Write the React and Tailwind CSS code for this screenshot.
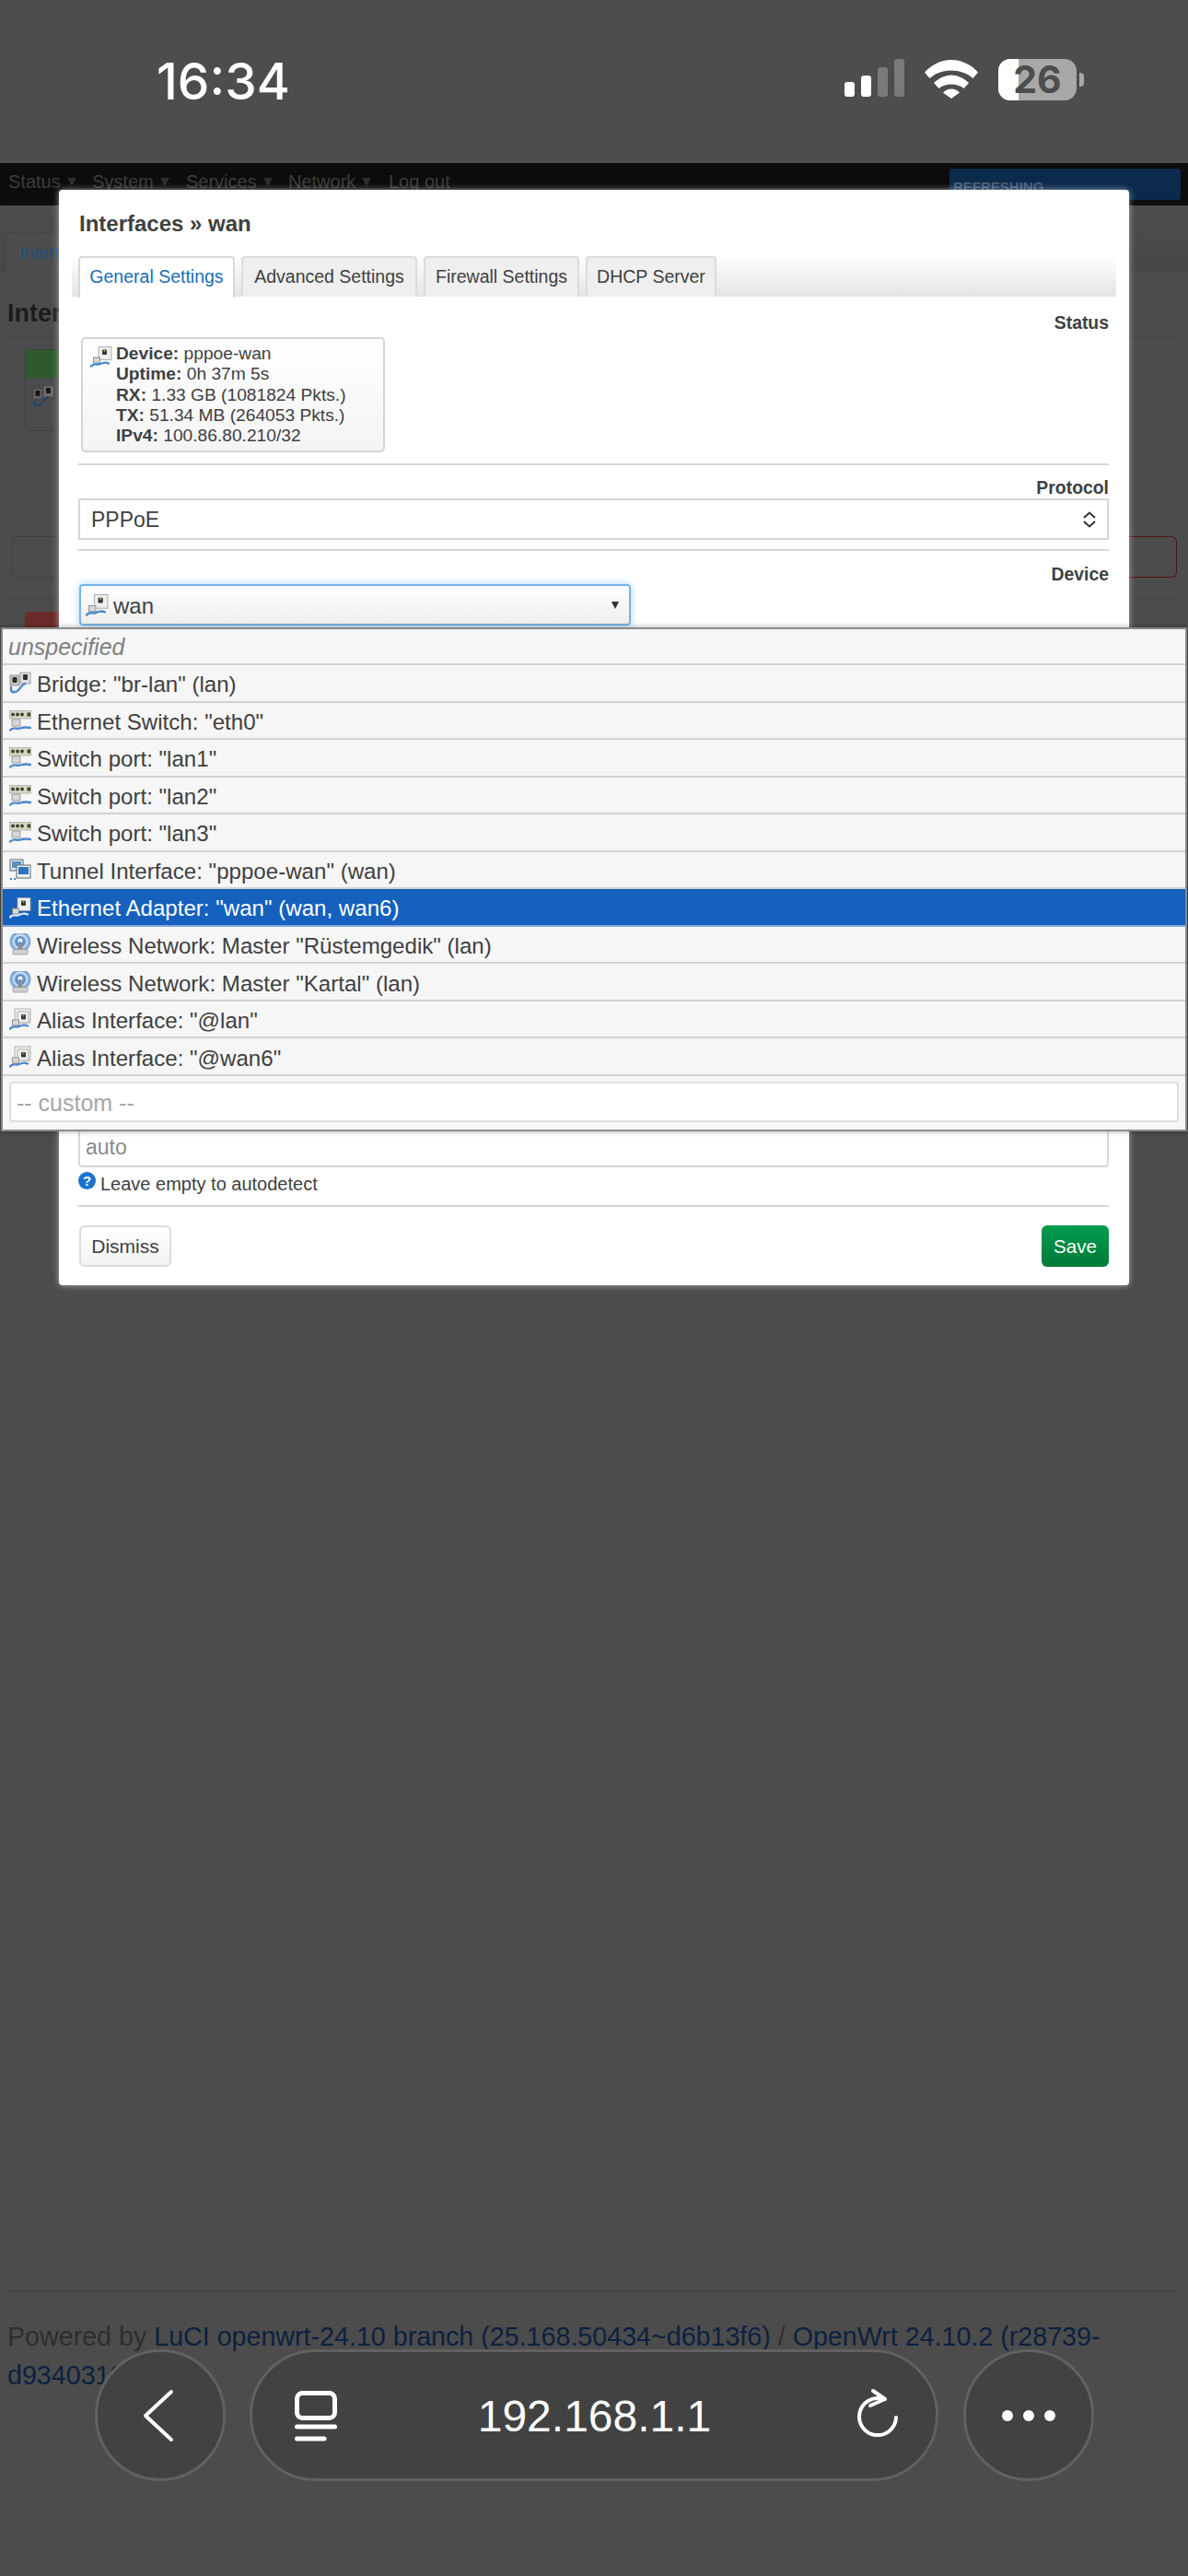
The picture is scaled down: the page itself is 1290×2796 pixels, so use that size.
import React from "react";

function Swoosh({ c = "#4a88cc" }) {
  return <path d="M1 22.5C4 18 7 22 11 20S17 18 20 19.5" fill="none" stroke={c} strokeWidth="2.4" strokeLinecap="round" />;
}

function AdapterIcon({ light, alias }) {
  return (
    <svg viewBox="0 0 24 24" className="w-full h-full">
      {alias && <rect x="6" y="1" width="17" height="15" fill="#f1f1f1" stroke="#a0a0a0" strokeWidth=".8" />}
      <rect x="9" y={alias ? 4 : 1.5} width={alias ? 12 : 14} height={alias ? 12 : 14} fill="#eeeeee" stroke="#a0a0a0" strokeWidth=".8" />
      <rect x="13" y={alias ? 7 : 4.5} width="5" height="5.5" rx="1" fill="#2f3a2a" />
      <rect x="14.6" y={alias ? 7.6 : 5.1} width="1.8" height="1.6" fill="#9fb56a" />
      <rect x="3.5" y="13" width="7" height="6" fill="#d6d6d6" stroke="#808080" strokeWidth=".8" />
      <Swoosh c={light ? "#dfe8f5" : "#4a88cc"} />
    </svg>
  );
}

function BridgeIcon() {
  return (
    <svg viewBox="0 0 24 24" className="w-full h-full">
      <rect x="1" y="4" width="10" height="11" fill="#c8c8c8" stroke="#808080" strokeWidth=".8" />
      <rect x="12" y="1" width="11" height="12" fill="#dedede" stroke="#909090" strokeWidth=".8" />
      <rect x="3.5" y="6" width="5" height="6" rx="1.2" fill="#2c2c2c" />
      <rect x="15" y="3" width="5" height="6" rx="1.2" fill="#2c2c2c" />
      <path d="M2 17V20C3 23 7 23 10 20S13 15 17 13" fill="none" stroke="#4a88cc" strokeWidth="2.4" strokeLinecap="round" />
    </svg>
  );
}

function SwitchIcon() {
  return (
    <svg viewBox="0 0 24 24" className="w-full h-full">
      <rect x="0.5" y="1.5" width="23" height="8.5" fill="#d8d8c4" stroke="#989898" strokeWidth=".6" />
      <circle cx="4" cy="5.5" r="2" fill="#3c4830" />
      <circle cx="9" cy="5.5" r="2" fill="#3c4830" />
      <circle cx="14" cy="5.5" r="2" fill="#3c4830" />
      <rect x="19.5" y="3.5" width="3.5" height="4" fill="#3c4830" />
      <rect x="3" y="11" width="9" height="7" fill="#d8d8d8" stroke="#808080" strokeWidth=".7" />
      <path d="M1 22.5C5 18 8 22 12 20.5S18 19 23 20" fill="none" stroke="#4a88cc" strokeWidth="2.4" strokeLinecap="round" />
    </svg>
  );
}

function TunnelIcon() {
  return (
    <svg viewBox="0 0 24 24" className="w-full h-full">
      <rect x="1" y="1" width="14" height="12" fill="#dfe5ec" stroke="#68747f" strokeWidth="1.1" />
      <rect x="3" y="3" width="10" height="7" fill="#5a8fc8" />
      <rect x="8" y="7" width="15" height="14" fill="#eef0f2" stroke="#68747f" strokeWidth="1.1" />
      <rect x="10" y="9" width="11" height="8" fill="#2f73bd" />
      <rect x="1" y="21" width="2" height="2" fill="#4a88cc" />
      <rect x="5" y="21" width="2" height="2" fill="#4a88cc" />
    </svg>
  );
}

function WifiIcon() {
  return (
    <svg viewBox="0 0 24 24" className="w-full h-full">
      <circle cx="12" cy="9" r="11.5" fill="#82abd9" />
      <circle cx="12" cy="9" r="8.5" fill="#c3d7ee" />
      <circle cx="12" cy="9" r="6" fill="#5d93cf" />
      <circle cx="12" cy="8" r="2.6" fill="#eaf1f8" />
      <path d="M9 18L11 9H13L15 18Z" fill="#8e8e8e" />
      <rect x="4" y="17.5" width="16" height="5.5" rx="1" fill="#cfcfcf" stroke="#949494" strokeWidth=".7" />
    </svg>
  );
}

const rows = [
  { t: 'Bridge: "br-lan" (lan)', I: BridgeIcon },
  { t: 'Ethernet Switch: "eth0"', I: SwitchIcon },
  { t: 'Switch port: "lan1"', I: SwitchIcon },
  { t: 'Switch port: "lan2"', I: SwitchIcon },
  { t: 'Switch port: "lan3"', I: SwitchIcon },
  { t: 'Tunnel Interface: "pppoe-wan" (wan)', I: TunnelIcon },
  { t: 'Ethernet Adapter: "wan" (wan, wan6)', I: AdapterIcon, sel: true },
  { t: 'Wireless Network: Master "Rüstemgedik" (lan)', I: WifiIcon },
  { t: 'Wireless Network: Master "Kartal" (lan)', I: WifiIcon },
  { t: 'Alias Interface: "@lan"', I: AdapterIcon, alias: true },
  { t: 'Alias Interface: "@wan6"', I: AdapterIcon, alias: true },
];

function NavItem({ label, caret = true, width }) {
  return (
    <div className={`flex items-center gap-[7px] h-[40px] ${width}`}>
      <span>{label}</span>
      {caret && (
        <svg viewBox="0 0 10 9" className="w-[10px] h-[9px]"><path d="M0 0H10L5 9Z" fill="#2e2e2e" /></svg>
      )}
    </div>
  );
}

export default function App() {
  return (
    <div className="relative w-[1290px] h-[2796px] overflow-hidden bg-[#4c4c4c] flex flex-col font-['Liberation_Sans',Arial,sans-serif]">
      {/* status bar */}
      <div className="h-[177px] shrink-0 bg-[#4d4d4d] flex items-start justify-between pt-[56px] pl-[170px] pr-[113px]">
        <span className="text-[55px] leading-[64px] font-['Inter',sans-serif] font-medium text-white">16:34</span>
        <div className="flex items-center gap-[22px] h-[60px]">
          <div className="flex items-end gap-[7px] h-[41px] mt-[-4px]">
            <div className="w-[11px] h-[16px] rounded-[3px] bg-white" />
            <div className="w-[11px] h-[23px] rounded-[3px] bg-white" />
            <div className="w-[11px] h-[32px] rounded-[3px] bg-[#7a7a7a]" />
            <div className="w-[11px] h-[41px] rounded-[3px] bg-[#7a7a7a]" />
          </div>
          <svg viewBox="0 0 58 43" className="w-[58px] h-[43px] mt-[-2px]">
            <path d="M0 14.5 L5.5 21 C18 9.5 40 9.5 52.5 21 L58 14.5 C42 -3.5 16 -3.5 0 14.5Z" fill="#fff" />
            <path d="M10 26 L15.5 32 C22 26 36 26 42.5 32 L48 26 C36 14.5 22 14.5 10 26Z" fill="#fff" />
            <path d="M20 36.5 L29 43 L38 36.5 C33 31 25 31 20 36.5Z" fill="#fff" />
          </svg>
          <div className="flex items-center">
            <div className="relative w-[85px] h-[45px] rounded-[13px] bg-[#a8a8a8] flex items-center justify-center">
              <div className="absolute left-0 top-0 bottom-0 w-[22px] rounded-l-[13px] bg-white" />
              <span className="relative text-[41px] leading-[45px] font-['Inter',sans-serif] font-bold text-[#4d4d4d]">26</span>
            </div>
            <div className="w-[5px] h-[15px] ml-[3px] rounded-r-[4px] bg-[#a8a8a8]" />
          </div>
        </div>
      </div>

      {/* dimmed nav */}
      <div className="h-[46px] shrink-0 bg-[#0c0c0c] flex items-start pl-[9px] pr-[8px] text-[20px] leading-[40px] text-[#3c3c3c]">
        <NavItem label="Status" width="w-[91px]" />
        <NavItem label="System" width="w-[102px]" />
        <NavItem label="Services" width="w-[111px]" />
        <NavItem label="Network" width="w-[109px]" />
        <NavItem label="Log out" caret={false} width="w-[80px]" />
        <div className="ml-auto mt-[6px] w-[251px] h-[34px] rounded-[3px] bg-[#0c2a4c] pl-[4px] text-[15px] leading-[40px] font-bold text-[#4a5d75]">REFRESHING</div>
      </div>

      {/* dimmed page */}
      <div className="h-[73px] shrink-0 bg-gradient-to-b from-[#4d4d4d] to-[#474747] flex items-end pl-[6px]">
        <div className="w-[200px] h-[44px] rounded-t-[4px] border border-[#454545] border-b-0 bg-[#4d4d4d] pl-[14px] text-[19px] leading-[44px] text-[#1e5083]">Interfaces</div>
      </div>
      <div className="flex-1 flex flex-col px-[8px]">
        <div className="h-[70px] shrink-0 border-b-2 border-[#464646] text-[27px] leading-[88px] font-bold text-[#1c1c1c] overflow-hidden">Interfaces</div>
        <div className="ml-[19px] mt-[13px] w-[300px] h-[89px] rounded-[5px] border border-[#3e3e3e] overflow-hidden">
          <div className="h-[30px] bg-[#2e5a2e]" />
          <div className="w-[24px] h-[24px] ml-[7px] mt-[8px] brightness-50"><BridgeIcon /></div>
        </div>
        <div className="ml-[5px] mt-[114px] mr-[4px] h-[45px] flex">
          <div className="flex-1 rounded-l-[6px] border border-r-0 border-[#424242]" />
          <div className="flex-1 rounded-r-[6px] border border-l-0 border-[#4f1212]" />
        </div>
        <div className="mt-[23px] h-[2px] bg-[#464646]" />
        <div className="ml-[19px] mt-[12px] w-[300px] h-[30px] rounded-t-[5px] bg-[#6b2a2a]" />

        <div className="mt-auto border-t-2 border-[#474747] h-[310px] shrink-0 pt-[27px] text-[28.65px] leading-[42px] text-[#2e2e2e]">
          Powered by <span className="text-[#0d2140]">LuCI openwrt-24.10 branch (25.168.50434~d6b13f6)</span> / <span className="text-[#0d2140]">OpenWrt 24.10.2 (r28739-d9340319)</span>
        </div>
      </div>

      {/* modal */}
      <div className="absolute left-[64px] top-[206px] w-[1162px] h-[1189px] bg-white rounded-[4px] shadow-[0_0_7px_rgba(255,255,255,0.55)] flex flex-col text-[#404040]">
        <div className="h-[71px] shrink-0 pl-[22px] pt-[21px] text-[24px] leading-[32px] font-bold">Interfaces » wan</div>
        <div className="mx-[14px] h-[45px] shrink-0 flex items-end gap-[7px] pl-[7px] bg-gradient-to-b from-white to-[#e4e4e4] text-[19.5px]">
          <div className="w-[170px] h-[45px] rounded-t-[4px] border-2 border-b-0 border-[#d8d8d8] bg-white -mb-[1px] text-center leading-[40px] text-[#1a6fb5]">General Settings</div>
          <div className="w-[191px] h-[44px] rounded-t-[4px] border-2 border-b-0 border-[#dcdcdc] bg-[#efefef] text-center leading-[40px]">Advanced Settings</div>
          <div className="w-[169px] h-[44px] rounded-t-[4px] border-2 border-b-0 border-[#dcdcdc] bg-[#efefef] text-center leading-[40px]">Firewall Settings</div>
          <div className="w-[142px] h-[44px] rounded-t-[4px] border-2 border-b-0 border-[#dcdcdc] bg-[#efefef] text-center leading-[40px]">DHCP Server</div>
        </div>
        <div className="flex-1 flex flex-col pl-[21px] pr-[22px]">
          <div className="mt-[17px] h-[23px] text-right text-[19.4px] leading-[22px] font-bold">Status</div>
          <div className="mt-[4px] ml-[3px] w-[330px] h-[125px] rounded-[5px] border-2 border-[#d4d4d4] bg-gradient-to-b from-white to-[#f4f4f4] flex pl-[8px] pt-[5px]">
            <div className="w-[24px] h-[24px] shrink-0 mt-[2px]"><AdapterIcon /></div>
            <div className="ml-[4px] text-[19.2px] leading-[22.3px]">
              <div><b>Device:</b> pppoe-wan</div>
              <div><b>Uptime:</b> 0h 37m 5s</div>
              <div><b>RX:</b> 1.33 GB (1081824 Pkts.)</div>
              <div><b>TX:</b> 51.34 MB (264053 Pkts.)</div>
              <div><b>IPv4:</b> 100.86.80.210/32</div>
            </div>
          </div>
          <div className="mt-[12px] h-[2px] shrink-0 bg-[#d6d6d6]" />
          <div className="mt-[13px] h-[22px] text-right text-[19.4px] leading-[22px] font-bold">Protocol</div>
          <div className="mt-[1px] h-[45px] shrink-0 border-2 border-[#d6d6d6] flex items-center justify-between pl-[12px] pr-[11px] text-[23px] leading-[43px]">
            <span className="pt-[1px]">PPPoE</span>
            <svg viewBox="0 0 16 18" className="w-[16px] h-[18px]" fill="none" stroke="#333" strokeWidth="2">
              <path d="M2 7L8 1.5L14 7" />
              <path d="M2 11L8 16.5L14 11" />
            </svg>
          </div>
          <div className="mt-[10px] h-[2px] shrink-0 bg-[#d6d6d6]" />
          <div className="mt-[14px] h-[20px] text-right text-[19.4px] leading-[22px] font-bold">Device</div>
          <div className="mt-[2px] ml-[1px] w-[599px] h-[45px] shrink-0 rounded-[4px] border-2 border-[#74b4e8] bg-gradient-to-b from-white to-[#eeeeee] shadow-[0_0_8px_#a8d4f5] flex items-center pl-[5px] pr-[11px] text-[24px]">
            <div className="w-[25px] h-[25px] shrink-0"><AdapterIcon /></div>
            <span className="ml-[5px] pt-[2px]">wan</span>
            <svg viewBox="0 0 8 8" className="ml-auto w-[8px] h-[8px]"><path d="M0 0H8L4 8Z" fill="#333" /></svg>
          </div>
          <div className="mt-[545px] h-[43px] shrink-0 rounded-[4px] border-2 border-[#d8d8d8] pl-[6px] text-[23px] leading-[38px] text-[#8a8a8a]">auto</div>
          <div className="mt-[5px] flex items-start h-[24px] text-[20px] leading-[26px]">
            <span className="w-[19px] h-[19px] rounded-full bg-[#1a73d0] text-white text-[15px] leading-[19px] font-bold text-center">?</span>
            <span className="ml-[5px]">Leave empty to autodetect</span>
          </div>
          <div className="mt-[12px] h-[2px] shrink-0 bg-[#d6d6d6]" />
          <div className="mt-[20px] flex items-center justify-between">
            <div className="ml-[1px] w-[100px] h-[45px] rounded-[6px] border-2 border-[#dcdcdc] bg-gradient-to-b from-white to-[#f3f3f3] text-center text-[21px] leading-[41px]">Dismiss</div>
            <div className="w-[73px] h-[45px] rounded-[6px] bg-gradient-to-b from-[#009c50] to-[#007a38] text-center text-[20.6px] leading-[45px] text-white">Save</div>
          </div>
        </div>
      </div>

      {/* dropdown */}
      <div className="absolute left-[1px] top-[681px] w-[1288px] h-[547px] border-2 border-[#8c8c8c] bg-[#f6f6f6] shadow-[0_0_6px_rgba(0,0,0,0.35)] text-[24.1px] text-[#404040]">
        <div className="h-[39px] border-b-2 border-[#d2d2d2] pl-[6px] text-[25px] leading-[39px] italic text-[#808080]">unspecified</div>
        {rows.map(({ t, I, sel, alias }) => (
          <div key={t} className={`h-[40.55px] flex items-center border-b-2 pl-[7px] ${sel ? "bg-[#1561bd] border-[#7fa8dc] text-white" : "border-[#d2d2d2]"}`}>
            <div className="w-[24px] h-[24px] shrink-0">
              <I light={sel} alias={alias} />
            </div>
            <span className="ml-[6px] pt-[4px] whitespace-nowrap">{t}</span>
          </div>
        ))}
        <div className="mx-[7px] mt-[6px] h-[44px] rounded-[4px] border-2 border-[#dedede] bg-white pl-[6px] text-[25px] leading-[42px] text-[#a6a6a6]">-- custom --</div>
      </div>

      {/* browser bar */}
      <div className="absolute left-[103px] top-[2550px] w-[1084px] h-[143px] flex gap-[27px] text-white">
        <div className="w-[142px] h-[143px] shrink-0 rounded-full bg-[#424242] border-[3px] border-[#616161] flex items-center justify-center">
          <svg viewBox="0 0 34 58" className="w-[34px] h-[58px] mr-[5px]" fill="none" stroke="#fff" strokeWidth="4" strokeLinecap="round" strokeLinejoin="round">
            <path d="M31 3L3 29L31 55" />
          </svg>
        </div>
        <div className="w-[748px] -ml-[1px] h-[143px] shrink-0 rounded-full bg-[#424242] border-[3px] border-[#616161] flex items-center pl-[46px] pr-[38px] justify-between">
          <svg viewBox="0 0 46 56" className="w-[46px] h-[56px] mt-[2px]" fill="none" stroke="#fff" strokeWidth="5" strokeLinecap="round">
            <rect x="2.5" y="2.5" width="41" height="27" rx="6" />
            <path d="M2.5 39H43.5" />
            <path d="M2.5 52H32" />
          </svg>
          <span className="text-[48px] leading-[60px] pt-[3px] -ml-[3px]">192.168.1.1</span>
          <svg viewBox="0 0 50 60" className="w-[50px] h-[60px]" fill="none" stroke="#fff" strokeWidth="4" strokeLinecap="round" strokeLinejoin="round">
            <path d="M31 12A20 20 0 1 0 45 32" />
            <path d="M20 3L33 12L17 19" />
          </svg>
        </div>
        <div className="w-[142px] h-[143px] shrink-0 rounded-full bg-[#424242] border-[3px] border-[#616161] flex items-center justify-center gap-[11px]">
          <div className="w-[12px] h-[12px] rounded-full bg-white" />
          <div className="w-[12px] h-[12px] rounded-full bg-white" />
          <div className="w-[12px] h-[12px] rounded-full bg-white" />
        </div>
      </div>
    </div>
  );
}
